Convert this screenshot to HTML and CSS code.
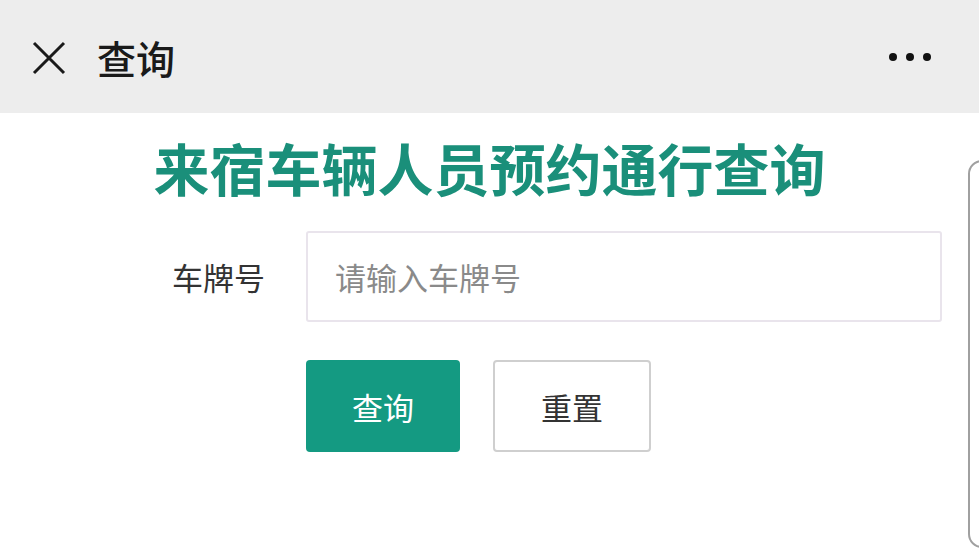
FILE: index.html
```html
<!DOCTYPE html>
<html lang="zh-CN">
<head>
<meta charset="utf-8">
<title>查询</title>
<link rel="stylesheet" href="styles.css">
</head>
<body>
<header class="topbar">
  <svg class="close" width="34" height="34" viewBox="0 0 34 34" aria-hidden="true">
    <path d="M2 2 L32 32 M32 2 L2 32" stroke="#1a1a1a" stroke-width="3" fill="none"/>
  </svg>
  <span class="bar-title">查询</span>
  <span class="more"><i></i><i></i><i></i></span>
</header>
<main class="content">
  <h1 class="page-title">来宿车辆人员预约通行查询</h1>
  <div class="form-row">
    <label class="label" for="plate">车牌号</label>
    <input id="plate" class="input" type="text" placeholder="请输入车牌号">
  </div>
  <div class="btn-row">
    <button class="btn btn-primary">查询</button>
    <button class="btn btn-default">重置</button>
  </div>
</main>
<div class="edge"></div>
</body>
</html>
```

FILE: styles.css
```css
html, body {
  margin: 0;
  padding: 0;
  background: #ffffff;
  font-family: "Noto Sans CJK SC", "Noto Sans", sans-serif;
  overflow: hidden;
}
.topbar {
  height: 113px;
  background: #ededed;
  display: flex;
  align-items: center;
  padding: 0 0 0 32px;
  box-sizing: border-box;
}
.close {
  display: block;
  margin-top: 2px;
}
.bar-title {
  margin-left: 31px;
  font-size: 39px;
  font-weight: 500;
  color: #1a1a1a;
  line-height: 1;
  margin-top: 2px;
}
.more {
  margin-left: auto;
  margin-right: 48px;
  display: flex;
  gap: 9px;
}
.more i {
  display: block;
  width: 8px;
  height: 8px;
  border-radius: 50%;
  background: #111;
}
.content {
  padding-top: 26px;
}
.page-title {
  margin: 0;
  text-align: center;
  font-size: 56px;
  line-height: 56px;
  font-weight: 700;
  color: #1a8f7a;
  letter-spacing: 0;
}
.form-row {
  display: flex;
  align-items: center;
  margin-top: 36px;
  padding-left: 172px;
}
.label {
  width: 96px;
  font-size: 31px;
  color: #333;
  line-height: 1;
}
.input {
  margin-left: 38px;
  width: 636px;
  height: 91px;
  box-sizing: border-box;
  border: 2px solid #e9e4ec;
  border-radius: 3px;
  padding: 0 0 0 27px;
  font-family: inherit;
  font-size: 31px;
  color: #333;
  outline: none;
  background: #fff;
}
.input::placeholder {
  color: #8a8a8a;
}
.btn-row {
  display: flex;
  gap: 33px;
  margin-top: 38px;
  padding-left: 306px;
}
.btn {
  height: 92px;
  box-sizing: border-box;
  font-family: inherit;
  font-size: 31px;
  border-radius: 4px;
  padding: 0;
  line-height: 1;
}
.btn-primary {
  width: 154px;
  background: #149a82;
  border: none;
  color: #ffffff;
}
.btn-default {
  width: 158px;
  background: #ffffff;
  border: 2px solid #cfcfcf;
  color: #333;
}
.edge {
  position: absolute;
  left: 968px;
  top: 160px;
  width: 40px;
  height: 388px;
  border: 2px solid #a0a0a0;
  border-radius: 14px;
  box-sizing: border-box;
}
```
